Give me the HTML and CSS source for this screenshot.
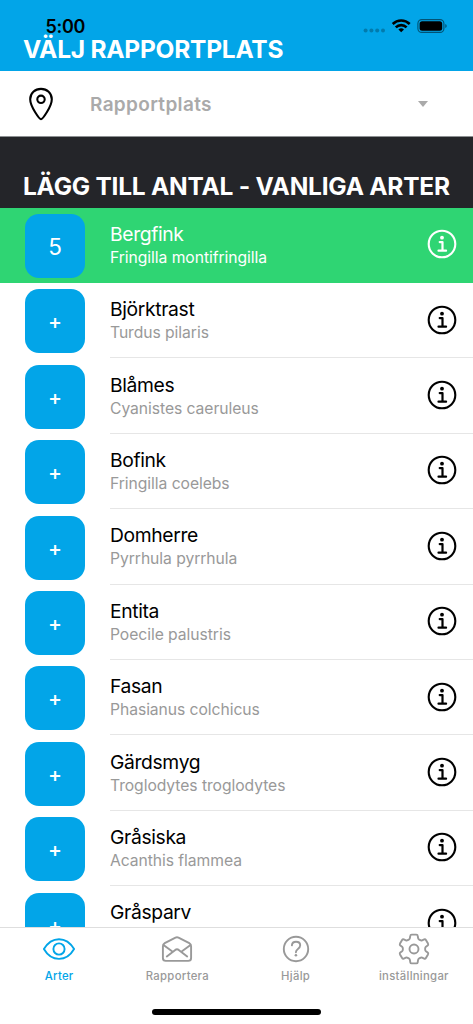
FILE: index.html
```html
<!DOCTYPE html>
<html lang="sv">
  <head>
    <meta charset="UTF-8" />
    <meta name="viewport" content="width=device-width, initial-scale=1.0" />
    <title>Arter</title>
    <link rel="stylesheet" href="styles.css">
  </head>
  <body>
    <!-- shared icons -->
    <svg class="sprite" aria-hidden="true">
      <symbol id="icon-info" viewBox="0 0 30 30">
        <circle cx="15" cy="15" r="13.3" fill="none" stroke="currentColor" stroke-width="2.1" />
        <circle cx="15" cy="8.7" r="1.9" fill="currentColor" />
        <path d="M12.7 13.1h2.8v8.3M11.5 21.7h7.6" fill="none" stroke="currentColor" stroke-width="2.2" stroke-linecap="round" stroke-linejoin="round" />
      </symbol>
    </svg>

    <div class="app">
      <div class="status-bar">
        <span class="time">5:00</span>
        <svg class="status-icons" width="86" height="16" viewBox="0 0 86 16">
          <g fill="#000" opacity="0.25">
            <circle cx="2.6" cy="12.6" r="2" />
            <circle cx="8.4" cy="12.6" r="2" />
            <circle cx="14.2" cy="12.6" r="2" />
            <circle cx="20" cy="12.6" r="2" />
          </g>
          <g fill="none" stroke="#000" stroke-width="2.6">
            <path d="M29.7 6a12.2 12.2 0 0 1 17 0" />
            <path d="M32.8 9.4a7.6 7.6 0 0 1 10.8 0" />
          </g>
          <path d="M35.4 11.5a4.1 4.1 0 0 1 5.6 0l-2.8 2.8z" />
          <rect x="54.9" y="1.6" width="26" height="12.8" rx="3.9" fill="none" stroke="#000" stroke-opacity="0.5" stroke-width="1.1" />
          <rect x="56.6" y="3.2" width="22.6" height="9.6" rx="2.5" />
          <path d="M82.3 5.9v4.2c1.9-.7 1.9-3.5 0-4.2z" opacity="0.5" />
        </svg>
      </div>

      <header class="section-header place-header">
        <h1>VÄLJ RAPPORTPLATS</h1>
      </header>

      <div class="place-picker">
        <svg class="pin" width="26" height="34" viewBox="0 0 26 34">
          <path d="M13 32.2C11.5 32.2 2.2 19.5 2.2 12.2 2.2 6 7 1.9 13 1.9S23.8 6 23.8 12.2C23.8 19.5 14.5 32.2 13 32.2z" />
          <circle cx="13" cy="12.3" r="3.7" />
        </svg>
        <span class="placeholder">Rapportplats</span>
        <span class="caret"></span>
      </div>

      <header class="section-header species-header">
        <h2>LÄGG TILL ANTAL - VANLIGA ARTER</h2>
      </header>

      <ul class="species-list">
        <li class="species selected">
          <button class="count">5</button>
          <div class="species-body">
            <div class="names">
              <p class="name">Bergfink</p>
              <p class="latin">Fringilla montifringilla</p>
            </div>
            <svg class="info"><use href="#icon-info" /></svg>
          </div>
        </li>
        <li class="species">
          <button class="count add">+</button>
          <div class="species-body">
            <div class="names">
              <p class="name">Björktrast</p>
              <p class="latin">Turdus pilaris</p>
            </div>
            <svg class="info"><use href="#icon-info" /></svg>
          </div>
        </li>
        <li class="species">
          <button class="count add">+</button>
          <div class="species-body">
            <div class="names">
              <p class="name">Blåmes</p>
              <p class="latin">Cyanistes caeruleus</p>
            </div>
            <svg class="info"><use href="#icon-info" /></svg>
          </div>
        </li>
        <li class="species">
          <button class="count add">+</button>
          <div class="species-body">
            <div class="names">
              <p class="name">Bofink</p>
              <p class="latin">Fringilla coelebs</p>
            </div>
            <svg class="info"><use href="#icon-info" /></svg>
          </div>
        </li>
        <li class="species">
          <button class="count add">+</button>
          <div class="species-body">
            <div class="names">
              <p class="name">Domherre</p>
              <p class="latin">Pyrrhula pyrrhula</p>
            </div>
            <svg class="info"><use href="#icon-info" /></svg>
          </div>
        </li>
        <li class="species">
          <button class="count add">+</button>
          <div class="species-body">
            <div class="names">
              <p class="name">Entita</p>
              <p class="latin">Poecile palustris</p>
            </div>
            <svg class="info"><use href="#icon-info" /></svg>
          </div>
        </li>
        <li class="species">
          <button class="count add">+</button>
          <div class="species-body">
            <div class="names">
              <p class="name">Fasan</p>
              <p class="latin">Phasianus colchicus</p>
            </div>
            <svg class="info"><use href="#icon-info" /></svg>
          </div>
        </li>
        <li class="species">
          <button class="count add">+</button>
          <div class="species-body">
            <div class="names">
              <p class="name">Gärdsmyg</p>
              <p class="latin">Troglodytes troglodytes</p>
            </div>
            <svg class="info"><use href="#icon-info" /></svg>
          </div>
        </li>
        <li class="species">
          <button class="count add">+</button>
          <div class="species-body">
            <div class="names">
              <p class="name">Gråsiska</p>
              <p class="latin">Acanthis flammea</p>
            </div>
            <svg class="info"><use href="#icon-info" /></svg>
          </div>
        </li>
        <li class="species">
          <button class="count add">+</button>
          <div class="species-body">
            <div class="names">
              <p class="name">Gråsparv</p>
            </div>
            <svg class="info"><use href="#icon-info" /></svg>
          </div>
        </li>
      </ul>

      <nav class="tab-bar">
        <div class="tabs">
          <a class="tab active">
            <svg width="34" height="34" viewBox="0 0 34 34">
              <path d="M1.9 17C5.5 11 11 7.2 17 7.2S28.5 11 32.1 17C28.5 23.2 23 26.9 17 26.9S5.5 23.2 1.9 17z" />
              <circle cx="17" cy="17" r="5.6" />
            </svg>
            <span>Arter</span>
          </a>
          <a class="tab">
            <svg width="34" height="34" viewBox="0 0 34 34">
              <path d="M2.9 14.5C2.9 12.6 3.2 12 4.7 11.2L15.5 5.7Q17 4.9 18.5 5.7L29.3 11.2C30.8 12 31.1 12.6 31.1 14.5V26Q31.1 28.9 28.2 28.9H5.8Q2.9 28.9 2.9 26z" />
              <path d="M3.5 13L12.7 19.8M30.5 13L21.3 19.8M6.8 24.5L15.3 17.9Q17 16.7 18.7 17.9L27.2 24.5" />
            </svg>
            <span>Rapportera</span>
          </a>
          <a class="tab">
            <svg width="34" height="34" viewBox="0 0 34 34">
              <circle cx="17" cy="17" r="12.2" />
              <path d="M12.9 13.3C13.1 10.8 14.8 9.8 17 9.8 19.4 9.8 21.2 11.2 21.2 13.3 21.2 15 20.3 15.9 18.9 16.9 17.5 17.9 16.9 18.7 16.9 20.3" />
              <circle class="dot" cx="16.9" cy="23.2" r="1.3" />
            </svg>
            <span>Hjälp</span>
          </a>
          <a class="tab">
            <svg width="34" height="34" viewBox="0 0 34 34">
              <path d="M14.7 2.6H19.3Q20.6 2.6 20.7 3.7L21.1 6.1Q21.3 7.1 22.2 7.6L23.3 8.2Q24.2 8.7 25.1 8.3L27.2 7.4Q28.3 7 28.9 8L31 11.6Q31.6 12.7 30.7 13.4L28.9 14.8Q28.1 15.5 28.1 17T28.9 19.2L30.7 20.6Q31.6 21.3 31 22.4L28.9 26Q28.3 27 27.2 26.6L25.1 25.7Q24.2 25.3 23.3 25.8L22.2 26.4Q21.3 26.9 21.1 27.9L20.7 30.3Q20.6 31.4 19.3 31.4H14.7Q13.4 31.4 13.3 30.3L12.9 27.9Q12.7 26.9 11.8 26.4L10.7 25.8Q9.8 25.3 8.9 25.7L6.8 26.6Q5.7 27 5.1 26L3 22.4Q2.4 21.3 3.3 20.6L5.1 19.2Q5.9 18.5 5.9 17T5.1 14.8L3.3 13.4Q2.4 12.7 3 11.6L5.1 8Q5.7 7 6.8 7.4L8.9 8.3Q9.8 8.7 10.7 8.2L11.8 7.6Q12.7 7.1 12.9 6.1L13.3 3.7Q13.4 2.6 14.7 2.6z" />
              <circle cx="17" cy="17" r="4.5" />
            </svg>
            <span>inställningar</span>
          </a>
        </div>
        <div class="home-indicator"></div>
      </nav>
    </div>
  </body>
</html>
```

FILE: styles.css
```css
:root {
  --blue: #02a5e8;
  --green: #2fd573;
  --dark: #242529;
  --grey: #999;
}

* {
  margin: 0;
  padding: 0;
  box-sizing: border-box;
}

body {
  font-family: Inter, "Liberation Sans", sans-serif;
  background-color: #fff;
  color: #000;
}

.sprite {
  position: absolute;
  width: 0;
  height: 0;
}

.app {
  position: relative;
  display: flex;
  flex-direction: column;
  height: 1024px;
  overflow: hidden;
}

/* lies over the scrolled header */
.status-bar {
  position: absolute;
  top: 16px;
  left: 45.5px;
  right: 24px;
  display: flex;
  justify-content: space-between;
  align-items: flex-start;
}

.time {
  font-size: 18px;
  font-weight: 600;
  line-height: 22px;
  letter-spacing: -0.3px;
}

.status-icons {
  margin-top: 2px;
}

.section-header {
  display: flex;
  align-items: flex-end;
  padding: 0 23px;
  color: #fff;
}

.section-header h1,
.section-header h2 {
  font-size: 24.5px;
  font-weight: 700;
  line-height: 30px;
  letter-spacing: -0.24px;
  white-space: nowrap;
}

.place-header {
  height: 71px;
  padding-bottom: 7px;
  background-color: var(--blue);
}

.place-picker {
  display: flex;
  align-items: center;
  height: 66px;
  padding: 0 45px 0 28px;
  border-bottom: 1px solid #8d9092;
}

.pin {
  fill: none;
  stroke: #000;
  stroke-width: 2.1;
  stroke-linejoin: round;
}

.placeholder {
  flex: 1;
  margin-left: 36px;
  padding-top: 2px;
  font-size: 19px;
  font-weight: 600;
  line-height: 24px;
  letter-spacing: 0.33px;
  color: #aaa;
}

.caret {
  border: 5.5px solid transparent;
  border-top: 6px solid #aaa;
  border-bottom: none;
}

.species-header {
  height: 70.6px;
  padding-bottom: 7px;
  background-color: var(--dark);
}

.species-list {
  flex: 1;
  min-height: 0;
  overflow: hidden;
  list-style: none;
}

.species {
  display: flex;
  align-items: center;
  height: 75.4px;
  padding-left: 25.3px;
}

.count {
  width: 59.4px;
  height: 64px;
  margin-top: 1.6px;
  margin-right: 25.3px;
  border: none;
  border-radius: 14px;
  background-color: var(--blue);
  color: #fff;
  font-family: inherit;
  font-size: 22.5px;
}

.add {
  padding-top: 1px;
  font-size: 21px;
  font-weight: 500;
}

.species-body {
  flex: 1;
  display: flex;
  align-items: center;
  justify-content: space-between;
  height: 100%;
  padding-right: 16px;
  border-bottom: 1px solid #e6e6e6;
}

.names {
  height: 48px;
  margin-top: 2px;
}

.name {
  font-size: 19.3px;
  line-height: 24px;
  letter-spacing: -0.35px;
}

.latin {
  font-size: 15.7px;
  line-height: 24px;
  letter-spacing: -0.06px;
  color: var(--grey);
}

.info {
  width: 30px;
  height: 30px;
  margin-bottom: 1px;
}

.selected {
  background-color: var(--green);
  color: #fff;
}

.selected .latin {
  color: #fff;
}

.selected .species-body {
  border-bottom-color: transparent;
}

.tab-bar {
  height: 97.4px;
  border-top: 1px solid #dedede;
  background-color: #fff;
}

.tabs {
  display: flex;
  padding-top: 4px;
}

.tab {
  flex: 1;
  display: flex;
  flex-direction: column;
  align-items: center;
  color: var(--grey);
  font-size: 11.3px;
  font-weight: 500;
  line-height: 16px;
  letter-spacing: 0.3px;
}

.tab svg {
  margin-bottom: 2px;
  fill: none;
  stroke: currentColor;
  stroke-width: 1.9;
  stroke-linecap: round;
  stroke-linejoin: round;
}

.tab .dot {
  fill: currentColor;
  stroke: none;
}

.active {
  color: var(--blue);
}

.home-indicator {
  width: 169px;
  height: 6px;
  margin: 25px auto 0;
  border-radius: 3px;
  background-color: #000;
}
```
